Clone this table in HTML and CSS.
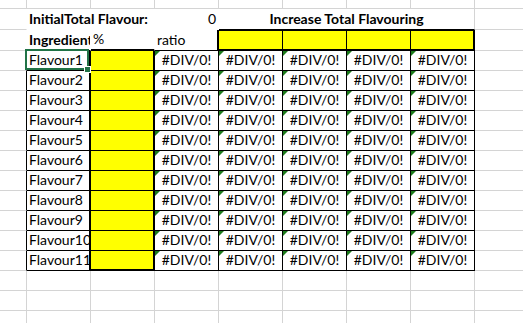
FILE: index.html
```html
<!DOCTYPE html>
<html lang="en">
<head>
<meta charset="utf-8">
<title>Flavour sheet</title>
<link rel="stylesheet" href="styles.css">
</head>
<body>
<div class="sheet">
  <!-- row 1 -->
  <div class="c"></div><div class="c"></div><div class="c"></div><div class="c"></div><div class="c"></div><div class="c"></div><div class="c"></div><div class="c"></div><div class="c"></div>
  <!-- row 2 -->
  <div class="c a-fill"></div>
  <div class="c title">InitialTotal Flavour:</div>
  <div class="c blank"></div>
  <div class="c blank num">0</div>
  <div class="c banner">Increase Total Flavouring</div>
  <div class="c"></div>
  <!-- row 3 -->
  <div class="c a-fill"></div>
  <div class="c head">Ingredients</div>
  <div class="c pct">%</div>
  <div class="c ratio">ratio</div>
  <div class="c ycell"></div><div class="c ycell"></div><div class="c ycell"></div><div class="c ycell last"></div>
  <div class="c"></div>
  <!-- row 4 -->
  <div class="c a-edge"></div>
  <div class="c name sel">Flavour1</div>
  <div class="c input"></div>
  <div class="c err">#DIV/0!</div><div class="c err">#DIV/0!</div><div class="c err">#DIV/0!</div><div class="c err">#DIV/0!</div><div class="c err">#DIV/0!</div>
  <div class="c"></div>
  <!-- row 5 -->
  <div class="c a-edge"></div>
  <div class="c name">Flavour2</div>
  <div class="c input"></div>
  <div class="c err">#DIV/0!</div><div class="c err">#DIV/0!</div><div class="c err">#DIV/0!</div><div class="c err">#DIV/0!</div><div class="c err">#DIV/0!</div>
  <div class="c"></div>
  <!-- row 6 -->
  <div class="c a-edge"></div>
  <div class="c name">Flavour3</div>
  <div class="c input"></div>
  <div class="c err">#DIV/0!</div><div class="c err">#DIV/0!</div><div class="c err">#DIV/0!</div><div class="c err">#DIV/0!</div><div class="c err">#DIV/0!</div>
  <div class="c"></div>
  <!-- row 7 -->
  <div class="c a-edge"></div>
  <div class="c name">Flavour4</div>
  <div class="c input"></div>
  <div class="c err">#DIV/0!</div><div class="c err">#DIV/0!</div><div class="c err">#DIV/0!</div><div class="c err">#DIV/0!</div><div class="c err">#DIV/0!</div>
  <div class="c"></div>
  <!-- row 8 -->
  <div class="c a-edge"></div>
  <div class="c name">Flavour5</div>
  <div class="c input"></div>
  <div class="c err">#DIV/0!</div><div class="c err">#DIV/0!</div><div class="c err">#DIV/0!</div><div class="c err">#DIV/0!</div><div class="c err">#DIV/0!</div>
  <div class="c"></div>
  <!-- row 9 -->
  <div class="c a-edge"></div>
  <div class="c name">Flavour6</div>
  <div class="c input"></div>
  <div class="c err">#DIV/0!</div><div class="c err">#DIV/0!</div><div class="c err">#DIV/0!</div><div class="c err">#DIV/0!</div><div class="c err">#DIV/0!</div>
  <div class="c"></div>
  <!-- row 10 -->
  <div class="c a-edge"></div>
  <div class="c name">Flavour7</div>
  <div class="c input"></div>
  <div class="c err">#DIV/0!</div><div class="c err">#DIV/0!</div><div class="c err">#DIV/0!</div><div class="c err">#DIV/0!</div><div class="c err">#DIV/0!</div>
  <div class="c"></div>
  <!-- row 11 -->
  <div class="c a-edge"></div>
  <div class="c name">Flavour8</div>
  <div class="c input"></div>
  <div class="c err">#DIV/0!</div><div class="c err">#DIV/0!</div><div class="c err">#DIV/0!</div><div class="c err">#DIV/0!</div><div class="c err">#DIV/0!</div>
  <div class="c"></div>
  <!-- row 12 -->
  <div class="c a-edge"></div>
  <div class="c name">Flavour9</div>
  <div class="c input"></div>
  <div class="c err">#DIV/0!</div><div class="c err">#DIV/0!</div><div class="c err">#DIV/0!</div><div class="c err">#DIV/0!</div><div class="c err">#DIV/0!</div>
  <div class="c"></div>
  <!-- row 13 -->
  <div class="c a-edge"></div>
  <div class="c name">Flavour10</div>
  <div class="c input"></div>
  <div class="c err">#DIV/0!</div><div class="c err">#DIV/0!</div><div class="c err">#DIV/0!</div><div class="c err">#DIV/0!</div><div class="c err">#DIV/0!</div>
  <div class="c"></div>
  <!-- row 14 -->
  <div class="c a-edge"></div>
  <div class="c name">Flavour11</div>
  <div class="c input end"></div>
  <div class="c err">#DIV/0!</div><div class="c err">#DIV/0!</div><div class="c err">#DIV/0!</div><div class="c err">#DIV/0!</div><div class="c err">#DIV/0!</div>
  <div class="c"></div>
  <!-- rows 15-17 -->
  <div class="c"></div><div class="c"></div><div class="c"></div><div class="c"></div><div class="c"></div><div class="c"></div><div class="c"></div><div class="c"></div><div class="c"></div>
  <div class="c"></div><div class="c"></div><div class="c"></div><div class="c"></div><div class="c"></div><div class="c"></div><div class="c"></div><div class="c"></div><div class="c"></div>
  <div class="c"></div><div class="c"></div><div class="c"></div><div class="c"></div><div class="c"></div><div class="c"></div><div class="c"></div><div class="c"></div><div class="c"></div>
</div>
</body>
</html>
```
FILE: styles.css
```css
html, body {
  margin: 0;
  padding: 0;
  background: #ffffff;
  overflow: hidden;
}

.sheet {
  display: grid;
  grid-template-columns: 27px repeat(7, 64px) 49px;
  grid-template-rows: 9px 21px 21px repeat(13, 20px) 14px;
  width: 524px;
  height: 324px;
  font-family: "Lato", "Liberation Sans", sans-serif;
  font-size: 14px;
  color: #000000;
}

.c {
  box-sizing: border-box;
  position: relative;
  display: flex;
  align-items: flex-end;
  padding: 0 2px 2px 2px;
  line-height: 17px;
  white-space: nowrap;
  overflow: hidden;
  border-right: 1px solid #d4d4d4;
  border-bottom: 1px solid #d4d4d4;
}

/* column A beside the filled header rows */
.a-fill { border-right-color: transparent; }
/* column A beside the table */
.a-edge { border-right-color: #000000; }

/* row 2 */
.title {
  font-weight: bold;
  overflow: visible;
  border-color: transparent;
}
.blank { border-color: transparent; }
.num { justify-content: flex-end; }
.banner {
  grid-column: span 4;
  justify-content: center;
  font-weight: bold;
  border-bottom-color: #000000;
}

/* row 3 */
.head {
  font-weight: bold;
  border-right-color: transparent;
  border-bottom-color: #000000;
}
.pct {
  border-right-color: transparent;
  border-bottom: 2px solid #000000;
}
.ratio {
  border-right: 2px solid #000000;
  border-bottom-color: #000000;
}
.ycell {
  background: #ffff00;
  border-top: 1px solid #000000;
  border-right-color: #000000;
  border-bottom: 2px solid #000000;
}
.ycell.last { border-right: 2px solid #000000; }

/* data rows */
.name {
  border-right: 2px solid #000000;
  border-bottom-color: #000000;
}
.input {
  background: #ffff00;
  border-right: 2px solid #000000;
  border-bottom-color: #000000;
}
.input.end { border-bottom: 2px solid #000000; }

.err {
  justify-content: center;
  border-right-color: #000000;
  border-bottom-color: #000000;
}
.err::before {
  content: "";
  position: absolute;
  top: 0;
  left: 0;
  width: 0;
  height: 0;
  border-top: 5px solid #1b7a1b;
  border-right: 5px solid transparent;
}

/* active cell selection */
.sel { overflow: visible; }
.sel::after {
  content: "";
  position: absolute;
  top: -2px;
  left: -2px;
  right: 0;
  bottom: 0;
  border: 2px solid #217346;
  z-index: 5;
}
.sel::before {
  content: "";
  position: absolute;
  right: -2px;
  bottom: -3px;
  width: 5px;
  height: 5px;
  background: #217346;
  border: 1px solid #ffffff;
  z-index: 6;
}
```
